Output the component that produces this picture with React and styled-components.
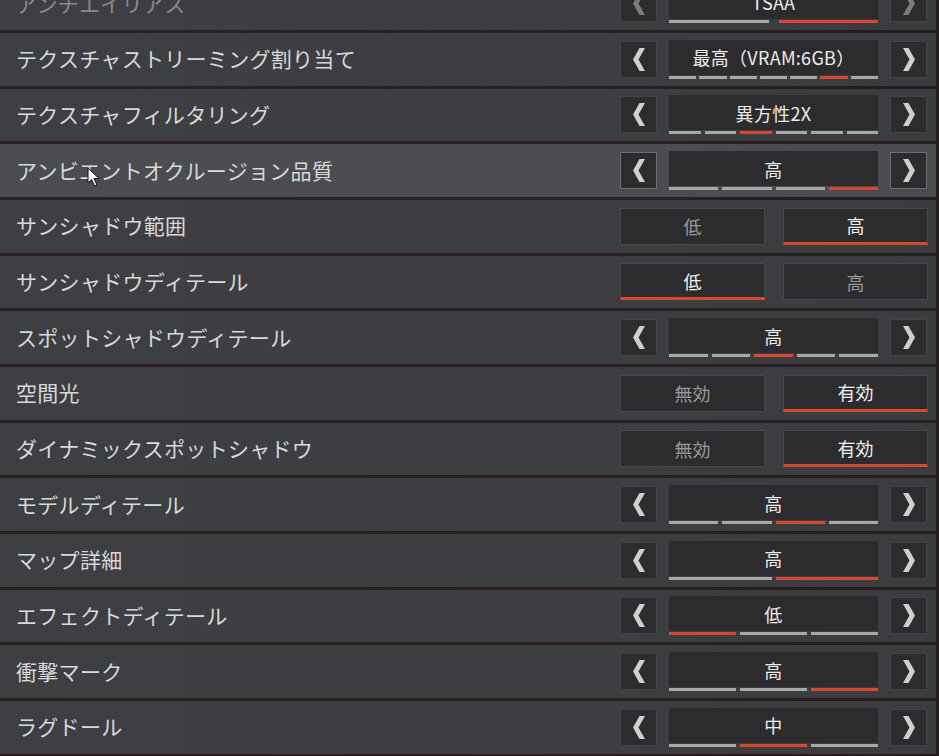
import React from "react"
import styled, { createGlobalStyle } from "styled-components"

const GlobalStyle = createGlobalStyle`
    html, body {
        margin: 0;
        padding: 0;
        background: #261e20;
        overflow: hidden;
    }
    body {
        font-family: "Noto Sans CJK JP", "Noto Sans", sans-serif;
    }
`

const Page = styled.div`
    width: 939px;
    height: 756px;
    overflow: hidden;
    background: linear-gradient(90deg, #2a2022 0%, #2b1f21 60%, #251c1e 100%);
`

const List = styled.div`
    display: flex;
    flex-direction: column;
    gap: 3px;
    margin-top: -22.67px;
    padding-right: 3px;
`

const Row = styled.div`
    position: relative;
    height: 52.67px;
    display: flex;
    align-items: center;
    padding: 0 8px 0 16px;
    background: ${p => p.$active
        ? "linear-gradient(90deg, #4a4c50 0%, #4b4d51 60%, #494b4f 100%)"
        : "linear-gradient(90deg, #3e3f43 0%, #3d3e42 60%, #3b3c40 100%)"};
`

const Label = styled.div`
    flex: 1;
    font-size: 21px;
    letter-spacing: 0.3px;
    margin-top: -2px;
    color: ${p => p.$faded ? "#8a8a8c" : "#d9d9d9"};
    white-space: nowrap;
`

const Stepper = styled.div`
    display: flex;
    align-items: center;
    gap: 12px;
    width: 308px;
`

const ArrowButton = styled.div`
    width: 37px;
    height: 37px;
    box-sizing: border-box;
    display: flex;
    align-items: center;
    justify-content: center;
    background: #2c2c2f;
    border: 1px solid ${p => p.$active ? "#6d6f73" : "#434447"};
    color: ${p => p.$faded ? "#7c7c7e" : "#cfcfcf"};
    flex-shrink: 0;
`

const ValueBox = styled.div`
    width: 209px;
    height: 39px;
    display: flex;
    flex-direction: column;
`

const ValueText = styled.div`
    flex: 1;
    background: #2c2c2e;
    display: flex;
    align-items: center;
    justify-content: center;
    font-size: 18px;
    color: #ececec;
    letter-spacing: 0.3px;
`

const Bars = styled.div`
    display: flex;
    gap: ${p => p.$gap}px;
    height: 3px;
    margin-top: 1px;
`

const Bar = styled.div`
    flex: 1;
    background: ${p => p.$on ? "#d9482b" : "#a8a8a8"};
`

const Toggle = styled.div`
    display: grid;
    grid-template-columns: 145px 145px;
    gap: 18px;
    width: 308px;
`

const ToggleOption = styled.div`
    height: 37px;
    box-sizing: border-box;
    display: flex;
    align-items: center;
    justify-content: center;
    background: #2c2c2e;
    border: 1px solid #47484b;
    border-bottom: ${p => p.$on ? "3px solid #d9482b" : "1px solid #47484b"};
    font-size: 18px;
    color: ${p => p.$on ? "#f0f0f0" : "#9a9a9a"};
`

const Cursor = styled.svg`
    position: absolute;
    left: 87px;
    top: 23px;
`

const Chevron = ({ dir }) => (
    <svg width="12" height="23" viewBox="0 0 12 23">
        {dir === "left"
            ? <polygon points="12,0 5.5,11.5 12,23 6.5,23 0,11.5 6.5,0" fill="currentColor" />
            : <polygon points="0,0 6.5,11.5 0,23 5.5,23 12,11.5 5.5,0" fill="currentColor" />}
    </svg>
)

const StepControl = ({ value, count, on, active, faded, gap = 4 }) => (
    <Stepper>
        <ArrowButton $active={active} $faded={faded}><Chevron dir="left" /></ArrowButton>
        <ValueBox>
            <ValueText>{value}</ValueText>
            <Bars $gap={gap}>
                {Array.from({ length: count }).map((_, i) => <Bar key={i} $on={i === on} />)}
            </Bars>
        </ValueBox>
        <ArrowButton $active={active} $faded={faded}><Chevron dir="right" /></ArrowButton>
    </Stepper>
)

const ToggleControl = ({ options, on }) => (
    <Toggle>
        {options.map((o, i) => <ToggleOption key={o} $on={i === on}>{o}</ToggleOption>)}
    </Toggle>
)

const settings = [
    { label: "アンチエイリアス", type: "step", value: "TSAA", count: 2, on: 1, faded: true, gap: 10 },
    { label: "テクスチャストリーミング割り当て", type: "step", value: "最高（VRAM:6GB）", count: 7, on: 5, gap: 3 },
    { label: "テクスチャフィルタリング", type: "step", value: "異方性2X", count: 6, on: 2, gap: 4 },
    { label: "アンビエントオクルージョン品質", type: "step", value: "高", count: 4, on: 3, active: true, gap: 4 },
    { label: "サンシャドウ範囲", type: "toggle", options: ["低", "高"], on: 1 },
    { label: "サンシャドウディテール", type: "toggle", options: ["低", "高"], on: 0 },
    { label: "スポットシャドウディテール", type: "step", value: "高", count: 5, on: 2, gap: 4 },
    { label: "空間光", type: "toggle", options: ["無効", "有効"], on: 1 },
    { label: "ダイナミックスポットシャドウ", type: "toggle", options: ["無効", "有効"], on: 1 },
    { label: "モデルディテール", type: "step", value: "高", count: 4, on: 2, gap: 4 },
    { label: "マップ詳細", type: "step", value: "高", count: 2, on: 1, gap: 4 },
    { label: "エフェクトディテール", type: "step", value: "低", count: 3, on: 0, gap: 4 },
    { label: "衝撃マーク", type: "step", value: "高", count: 3, on: 2, gap: 4 },
    { label: "ラグドール", type: "step", value: "中", count: 3, on: 1, gap: 4 },
]

export default function App() {
    return (
        <Page>
            <GlobalStyle />
            <List>
                {settings.map(s => (
                    <Row key={s.label} $active={s.active}>
                        <Label $faded={s.faded}>{s.label}</Label>
                        {s.active && (
                            <Cursor width="13" height="20" viewBox="0 0 13 20">
                                <polygon points="1,1 1,16 4.5,12.5 7.5,19 10,18 7,11.5 12,11.5" fill="#f4f4f4" stroke="#111" strokeWidth="1" />
                            </Cursor>
                        )}
                        {s.type === "step"
                            ? <StepControl {...s} />
                            : <ToggleControl options={s.options} on={s.on} />}
                    </Row>
                ))}
            </List>
        </Page>
    )
}
